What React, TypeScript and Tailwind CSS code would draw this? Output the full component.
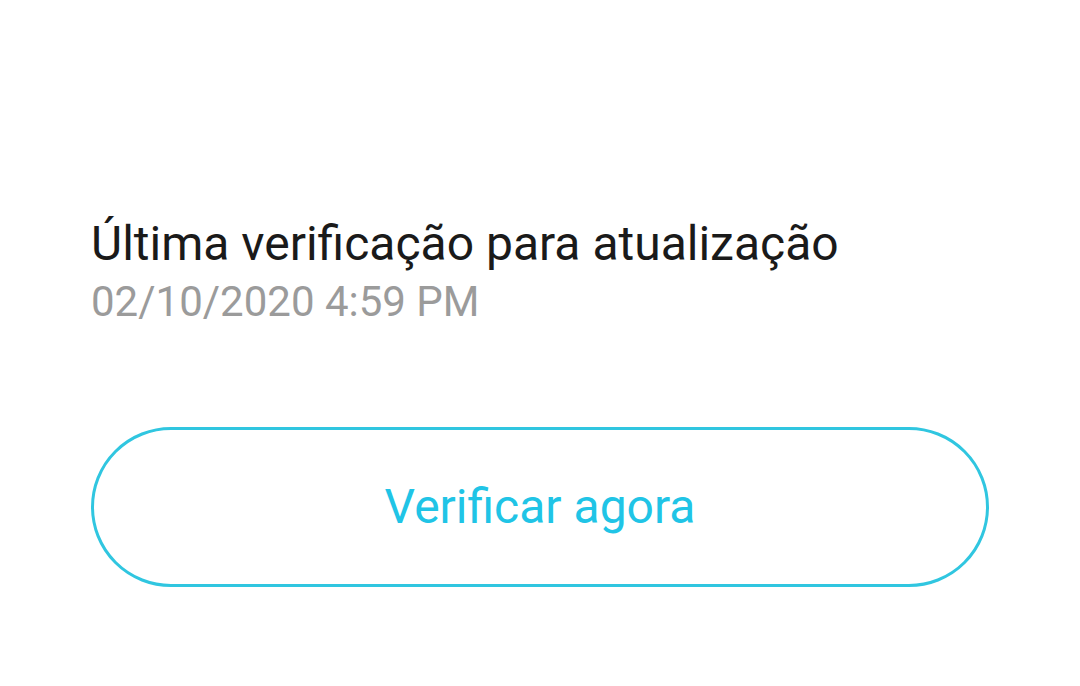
import React from 'react';

const App: React.FC = () => {
    return (
        <div className="w-[1080px] h-[686px] bg-white overflow-hidden" style={{ fontFamily: 'Roboto, "Noto Sans", sans-serif' }}>
            <div className="px-[91px] pt-[216px]">
                {/* Last check info */}
                <div className="flex flex-col">
                    <span className="text-[48px] leading-[56px] text-[#1a1a1a]">Última verificação para atualização</span>
                    <span className="mt-[5px] text-[42px] leading-[50px] text-[#9b9b9b]">02/10/2020 4:59 PM</span>
                </div>

                {/* Check button */}
                <button className="mt-[100px] w-full h-[160px] rounded-full border-[3px] border-[#30c6e0] flex items-center justify-center">
                    <span className="text-[48px] leading-[56px] text-[#20c4e6]">Verificar agora</span>
                </button>
            </div>
        </div>
    );
};

export default App;
